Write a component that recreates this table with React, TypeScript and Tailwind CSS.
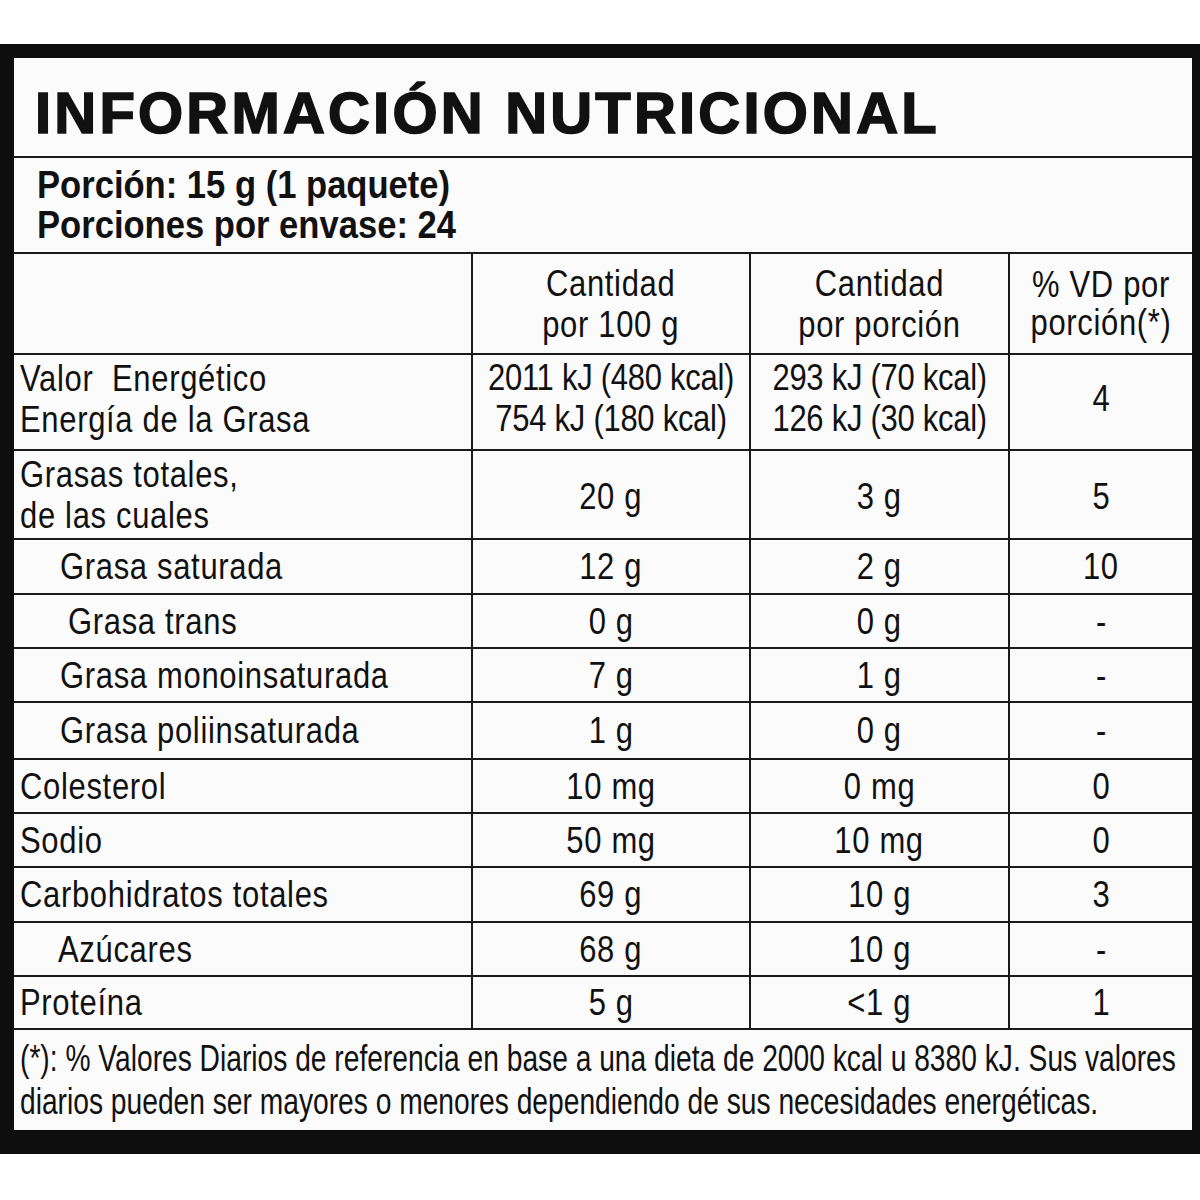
import React from 'react';

type Row = {
  label: React.ReactNode;
  pad: string;
  h: string;
  a: React.ReactNode;
  b: React.ReactNode;
  c: React.ReactNode;
  extra?: string;
};

const rows: Row[] = [
  {
    label: (
      <>
        Valor&nbsp; Energético
        <br />
        Energía de la Grasa
      </>
    ),
    pad: 'pl-[6px]',
    h: 'h-[96px]',
    a: (
      <span className="tracking-[-0.3px]">
        2011 kJ (480 kcal)
        <br />
        754 kJ (180 kcal)
      </span>
    ),
    b: (
      <span className="tracking-[-0.3px]">
        293 kJ (70 kcal)
        <br />
        126 kJ (30 kcal)
      </span>
    ),
    c: '4',
    extra: 'pb-[8px]',
  },
  {
    label: (
      <>
        Grasas totales,
        <br />
        de las cuales
      </>
    ),
    pad: 'pl-[6px]',
    h: 'h-[89px]',
    a: '20 g',
    b: '3 g',
    c: '5',
    extra: 'pt-[4px]',
  },
  { label: 'Grasa saturada', pad: 'pl-[46px]', h: 'h-[55px]', a: '12 g', b: '2 g', c: '10' },
  { label: 'Grasa trans', pad: 'pl-[54px]', h: 'h-[54px]', a: '0 g', b: '0 g', c: '-' },
  { label: 'Grasa monoinsaturada', pad: 'pl-[46px]', h: 'h-[54px]', a: '7 g', b: '1 g', c: '-' },
  { label: 'Grasa poliinsaturada', pad: 'pl-[46px]', h: 'h-[57px]', a: '1 g', b: '0 g', c: '-' },
  { label: 'Colesterol', pad: 'pl-[6px]', h: 'h-[54px]', a: '10 mg', b: '0 mg', c: '0' },
  { label: 'Sodio', pad: 'pl-[6px]', h: 'h-[54px]', a: '50 mg', b: '10 mg', c: '0' },
  { label: 'Carbohidratos totales', pad: 'pl-[6px]', h: 'h-[55px]', a: '69 g', b: '10 g', c: '3' },
  { label: 'Azúcares', pad: 'pl-[44px]', h: 'h-[54px]', a: '68 g', b: '10 g', c: '-' },
  { label: 'Proteína', pad: 'pl-[6px]', h: 'h-[53px]', a: '5 g', b: '<1 g', c: '1' },
];

const grid = 'grid grid-cols-[457px_278px_259px_184px] border-b-2 border-[#1a1a1a]';
const cell = 'flex items-center justify-center text-center border-l-2 border-[#1a1a1a]';

// condensed look: scale glyphs horizontally
const Left = ({ children }: { children: React.ReactNode }) => (
  <span className="inline-block origin-left scale-x-[0.86] whitespace-nowrap">{children}</span>
);
const Mid = ({ children }: { children: React.ReactNode }) => (
  <span className="inline-block origin-center scale-x-[0.86] whitespace-nowrap">{children}</span>
);

export default function App() {
  return (
    <div className="w-[1200px] h-[1200px] bg-white pt-[44px] font-['Liberation_Sans',Arial,sans-serif] text-[#111]">
      <div className="bg-[#0e0e0e] pl-[14px] pr-[8px] pt-[14px] pb-[24px]">
        <div className="w-[1178px] bg-[#fcfbfb] text-[36px] leading-[41px] tracking-[0.8px]">
          {/* title */}
          <div className="h-[100px] flex items-center pl-[21px] pt-[12px] border-b-2 border-[#1a1a1a]">
            <h1 className="text-[58px] leading-none font-bold tracking-[3.2px] [-webkit-text-stroke:1.6px_#111]">
              INFORMACIÓN NUTRICIONAL
            </h1>
          </div>

          {/* porción */}
          <div className="h-[96px] flex flex-col justify-center pl-[23px] border-b-2 border-[#1a1a1a] text-[38px] leading-[40px] font-bold tracking-[0px]">
            <span className="inline-block origin-left scale-x-[0.91] whitespace-nowrap">Porción: 15 g (1 paquete)</span>
            <span className="inline-block origin-left scale-x-[0.91] whitespace-nowrap">Porciones por envase: 24</span>
          </div>

          {/* header */}
          <div className={`${grid} h-[101px]`}>
            <div />
            <div className={cell}>
              <Mid>
                Cantidad
                <br />
                por 100 g
              </Mid>
            </div>
            <div className={cell}>
              <Mid>
                Cantidad
                <br />
                por porción
              </Mid>
            </div>
            <div className={`${cell} leading-[38px]`}>
              <Mid>
                % VD por
                <br />
                porción(*)
              </Mid>
            </div>
          </div>

          {rows.map((r, i) => (
            <div key={i} className={`${grid} ${r.h}`}>
              <div className={`flex items-center ${r.pad} ${i === 0 ? 'pb-[6px]' : ''}`}>
                <Left>{r.label}</Left>
              </div>
              <div className={`${cell} ${r.extra ?? ''}`}>
                <Mid>{r.a}</Mid>
              </div>
              <div className={`${cell} ${r.extra ?? ''}`}>
                <Mid>{r.b}</Mid>
              </div>
              <div className={`${cell} ${r.extra ?? ''}`}>
                <Mid>{r.c}</Mid>
              </div>
            </div>
          ))}

          {/* footnote */}
          <div className="h-[100px] flex flex-col justify-center pl-[6px] leading-[43px] tracking-[0px] whitespace-nowrap">
            <span className="inline-block origin-left scale-x-[0.783]">
              (*): % Valores Diarios de referencia en base a una dieta de 2000 kcal u 8380 kJ. Sus valores
            </span>
            <span className="inline-block origin-left scale-x-[0.783]">
              diarios pueden ser mayores o menores dependiendo de sus necesidades energéticas.
            </span>
          </div>
        </div>
      </div>
    </div>
  );
}
